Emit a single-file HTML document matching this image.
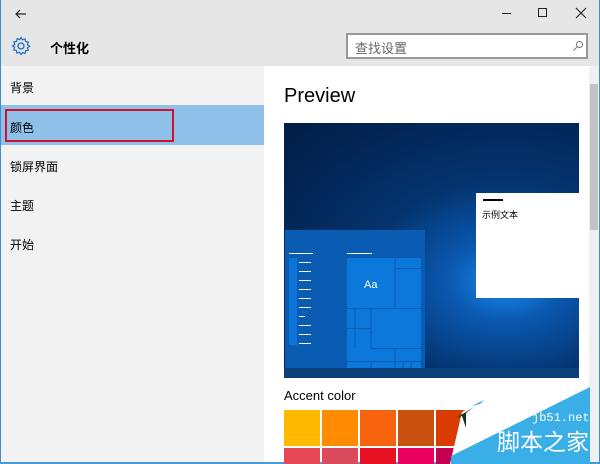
<!DOCTYPE html>
<html><head><meta charset="utf-8"><style>
*{margin:0;padding:0;box-sizing:border-box}
body{width:600px;height:464px;overflow:hidden;position:relative;background:#fff;font-family:"Liberation Sans","Noto Sans CJK SC",sans-serif}
.a{position:absolute}
.cn{font-family:"Liberation Sans","Noto Sans CJK SC",sans-serif;font-size:12px;color:#000}
</style></head><body>
<div class="a" style="left:0;top:0;width:600px;height:66px;background:#e6e6e6"></div>
<div class="a" style="left:0;top:66px;width:264px;height:398px;background:#f2f2f2"></div>
<div class="a" style="left:0;top:0;width:1px;height:464px;background:#3b8fd4"></div>
<div class="a" style="left:0;top:462px;width:600px;height:2px;background:#4a9ad6"></div>
<div class="a" style="left:599px;top:0;width:1px;height:464px;background:#3b8fd4"></div>
<svg class="a" style="left:13px;top:6px" width="16" height="16"><path d="M13 8H3M7 4L3 8l4 4" stroke="#222" stroke-width="1.2" fill="none"/></svg>
<div class="a" style="left:502px;top:13px;width:9px;height:1px;background:#222"></div>
<div class="a" style="left:538px;top:8px;width:9px;height:9px;border:1px solid #222"></div>
<svg class="a" style="left:575px;top:7px" width="12" height="12"><path d="M1 1L11 11M11 1L1 11" stroke="#222" stroke-width="1.1"/></svg>
<svg class="a" style="left:11px;top:36px" width="20" height="20" viewBox="0 0 20 20"><circle cx="10" cy="10" r="3" fill="none" stroke="#1b6ec2" stroke-width="1.3"/><path d="M10 1.5l1.5 2.3 2.6-.9.5 2.7 2.7.5-.9 2.6 2.3 1.5-2.3 1.5.9 2.6-2.7.5-.5 2.7-2.6-.9L10 18.5l-1.5-2.3-2.6.9-.5-2.7-2.7-.5.9-2.6L1.5 10l2.3-1.5-.9-2.6 2.7-.5.5-2.7 2.6.9z" fill="none" stroke="#1b6ec2" stroke-width="1.2"/></svg>
<div class="a cn" style="left:50px;top:38px;font-weight:bold;font-size:13px">个性化</div>
<div class="a" style="left:346px;top:33px;width:242px;height:26px;border:2px solid #999;background:#fff"></div>
<div class="a cn" style="left:355px;top:38px;color:#666;font-size:13px">查找设置</div>
<svg class="a" style="left:572px;top:40px" width="12" height="12"><circle cx="7.5" cy="4.5" r="3" fill="none" stroke="#777"/><path d="M5.5 6.5L1.5 10.5" stroke="#777"/></svg>
<div class="a cn" style="left:10px;top:79px;font-size:12px">背景</div>
<div class="a" style="left:1px;top:105px;width:263px;height:40px;background:#8ec0ea"></div>
<div class="a" style="left:5px;top:109px;width:169px;height:33px;border:2px solid #d0112b"></div>
<div class="a cn" style="left:10px;top:119px">颜色</div>
<div class="a cn" style="left:10px;top:158px">锁屏界面</div>
<div class="a cn" style="left:10px;top:197px">主题</div>
<div class="a cn" style="left:10px;top:236px">开始</div>
<div class="a" style="left:589px;top:66px;width:10px;height:396px;background:#f0f0f0"></div>
<div class="a" style="left:590px;top:84px;width:8px;height:146px;background:#c2c2c2"></div>
<div class="a" style="left:284px;top:85px;font-size:20px;color:#000">Preview</div>
<div class="a" style="left:284px;top:123px;width:295px;height:255px;background:radial-gradient(ellipse at 75% 62%,#1a8ef0 0%,#0a58b0 18%,#04336e 45%,#021c44 100%)"></div>
<div class="a" style="left:285px;top:230px;width:140px;height:138px;background:#0a5cb3"></div>
<div class="a" style="left:284px;top:368px;width:295px;height:10px;background:#0b3f7a"></div>
<div class="a" style="left:476px;top:193px;width:113px;height:105px;background:#fff"></div>
<div class="a" style="left:483px;top:199px;width:20px;height:2px;background:#000"></div>
<div class="a cn" style="left:482px;top:208px;font-size:9px">示例文本</div>
<div class="a" style="left:289px;top:253px;width:24px;height:1px;background:#fff"></div>
<div class="a" style="left:347px;top:253px;width:25px;height:1px;background:#fff"></div>
<div class="a" style="left:289px;top:258px;width:8px;height:87px;background:#0c74d8"></div>
<svg class="a" style="left:298px;top:258px" width="16" height="90"><g stroke="#fff" stroke-width="1"><path d="M1 4.5h12M1 13.5h12M1 22.5h12M1 31.5h12M1 40.5h12M1 49.5h12M1 58.5h6M1 67.5h12M1 76.5h12M1 85.5h12"/></g></svg>
<div class="a" style="left:347px;top:258px;width:74px;height:110px;background:#0c78dc"></div>
<svg class="a" style="left:347px;top:258px" width="74" height="110"><g stroke="#0a5cb3" stroke-width="1" fill="none"><path d="M48 0v50M48 10.5h26M0 50.5h74M24 50v40M24 90.5h50M8 50v40M0 70.5h24M48 90v20M0 103.5h74M24 103v7M56 103v7M64 103v7"/></g><text x="17" y="30" fill="#fff" font-size="11" font-family="Liberation Sans">Aa</text></svg>
<div class="a" style="left:284px;top:388px;font-size:13px;color:#000">Accent color</div>
<div class="a" style="left:284px;top:410px;width:36px;height:36px;background:#ffb900"></div>
<div class="a" style="left:322px;top:410px;width:36px;height:36px;background:#ff8c00"></div>
<div class="a" style="left:360px;top:410px;width:36px;height:36px;background:#f7630c"></div>
<div class="a" style="left:398px;top:410px;width:36px;height:36px;background:#ca5010"></div>
<div class="a" style="left:436px;top:410px;width:36px;height:36px;background:#da3b01"></div>
<div class="a" style="left:284px;top:448px;width:36px;height:16px;background:#e74856"></div>
<div class="a" style="left:322px;top:448px;width:36px;height:16px;background:#d84a5c"></div>
<div class="a" style="left:360px;top:448px;width:36px;height:16px;background:#e81123"></div>
<div class="a" style="left:398px;top:448px;width:36px;height:16px;background:#ea005e"></div>
<div class="a" style="left:436px;top:448px;width:36px;height:16px;background:#c30052"></div>
<div class="a" style="left:474px;top:448px;width:36px;height:16px;background:#e3008c"></div>
<div class="a" style="left:512px;top:448px;width:36px;height:16px;background:#bf0077"></div>
<svg class="a" style="left:440px;top:380px" width="160" height="84"><polygon points="10,84 22,32 40,22 150,7 150,84" fill="#fff"/><polygon points="11,76 150,7 150,84 11,84" fill="#3aaee6"/><polygon points="16,38 34,27 26,33 26,48 22,36" fill="#083a20"/><polygon points="32,26 44,20 40,24" fill="#3aaee6"/></svg>
<div class="a" style="left:532px;top:411px;font-family:'Liberation Mono',monospace;font-size:12px;color:#fff">jb51.net</div>
<div class="a" style="left:497px;top:426px;font-family:'Noto Sans CJK SC',sans-serif;font-size:23px;color:#fff;line-height:28px">脚本之家</div>
</body></html>
